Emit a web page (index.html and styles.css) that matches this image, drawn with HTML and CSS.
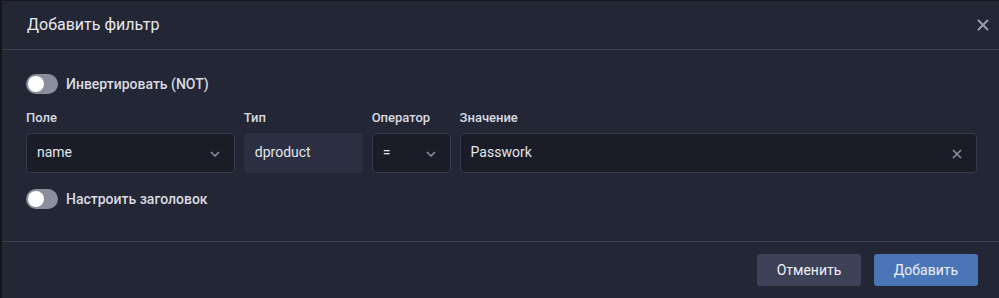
FILE: index.html
```html
<!DOCTYPE html>
<html lang="ru">
<head>
    <meta charset="utf-8">
    <title>Добавить фильтр</title>
    <link rel="stylesheet" href="styles.css">
</head>
<body>
    <div class="modal">
        <div class="modalHeader">
            <h2>Добавить фильтр</h2>
            <button class="closeBtn" aria-label="Закрыть">
                <svg width="12" height="12" viewBox="0 0 12 12"><path d="M1.5 1.5 L10.5 10.5 M10.5 1.5 L1.5 10.5" stroke="currentColor" stroke-width="2" stroke-linecap="round"/></svg>
            </button>
        </div>
        <div class="modalBody">
            <label class="switchRow">
                <span class="switch"><span class="knob"></span></span>
                Инвертировать (NOT)
            </label>
            <div class="fields">
                <div class="field field-name">
                    <span class="fieldLabel">Поле</span>
                    <div class="box">
                        <span>name</span>
                        <svg class="chevron" width="10" height="6" viewBox="0 0 10 6"><path d="M1 1 L5 5 L9 1" fill="none" stroke="currentColor" stroke-width="1.5"/></svg>
                    </div>
                </div>
                <div class="field field-type">
                    <span class="fieldLabel">Тип</span>
                    <div class="box disabled"><span>dproduct</span></div>
                </div>
                <div class="field field-op">
                    <span class="fieldLabel">Оператор</span>
                    <div class="box">
                        <span>=</span>
                        <svg class="chevron" width="10" height="6" viewBox="0 0 10 6"><path d="M1 1 L5 5 L9 1" fill="none" stroke="currentColor" stroke-width="1.5"/></svg>
                    </div>
                </div>
                <div class="field field-value">
                    <span class="fieldLabel">Значение</span>
                    <div class="box">
                        <span>Passwork</span>
                        <svg class="clear" width="10" height="10" viewBox="0 0 10 10"><path d="M1 1 L9 9 M9 1 L1 9" stroke="currentColor" stroke-width="1.6"/></svg>
                    </div>
                </div>
            </div>
            <label class="switchRow">
                <span class="switch"><span class="knob"></span></span>
                Настроить заголовок
            </label>
        </div>
        <div class="modalFooter">
            <button class="btn btn-cancel">Отменить</button>
            <button class="btn btn-primary">Добавить</button>
        </div>
    </div>
</body>
</html>
```

FILE: styles.css
```css
body {
    margin: 0;
    padding: 1px 0 0 2px;
    background-color: #15161c;
    font-family: Roboto, "Liberation Sans", sans-serif;
    color: #d9dbe2;
    overflow: hidden;
}

.modal {
    background-color: #232634;
    min-height: 320px;
}

.modalHeader {
    height: 48px;
    border-bottom: 1px solid #3a3e52;
    display: flex;
    align-items: center;
    justify-content: space-between;
    padding: 0 10px 0 25px;
}

    .modalHeader h2 {
        margin: 0;
        font-size: 16px;
        font-weight: 400;
        color: #e6e8ee;
        padding-bottom: 1px;
    }

.closeBtn {
    background: none;
    border: none;
    color: #9a9dab;
    padding: 0;
    width: 12px;
    height: 12px;
    display: flex;
}

.modalBody {
    padding: 24px 22px 32px 24px;
}

.switchRow {
    display: flex;
    align-items: center;
    gap: 8px;
    font-size: 14px;
    font-weight: 500;
    color: #d9dbe2;
    height: 20px;
}

.switch {
    width: 32px;
    height: 20px;
    border-radius: 10px;
    background-color: #8b8e9c;
    position: relative;
    flex-shrink: 0;
}

    .switch .knob {
        position: absolute;
        left: 2px;
        top: 2px;
        width: 16px;
        height: 16px;
        border-radius: 50%;
        background-color: #ffffff;
    }

.fields {
    display: flex;
    gap: 9px;
    margin: 16px 0 16px;
}

.field {
    display: flex;
    flex-direction: column;
}

.fieldLabel {
    font-size: 13px;
    font-weight: 500;
    line-height: 16px;
    color: #d9dbe2;
    margin-bottom: 7px;
}

.box {
    height: 38px;
    border: 1px solid #363a4c;
    border-radius: 4px;
    background-color: #1a1c27;
    display: flex;
    align-items: center;
    justify-content: space-between;
    padding: 0 14px 0 10px;
    font-size: 14px;
    line-height: 16px;
    color: #e3e5eb;
}

    .box span {
        padding-bottom: 3px;
    }

    .box.disabled {
        background-color: #2c2f41;
        border-color: #2c2f41;
    }

.chevron, .clear {
    color: #8e91a0;
    margin-top: 2px;
}

.field-name { width: 209px; }
.field-type { width: 119px; }
.field-op { width: 79px; }
.field-value { width: 518px; }

.modalFooter {
    border-top: 1px solid #3a3e52;
    display: flex;
    justify-content: flex-end;
    gap: 13px;
    padding: 12px 21px 0 0;
}

.btn {
    width: 104px;
    height: 32px;
    border: none;
    border-radius: 3px;
    font-family: Roboto, "Liberation Sans", sans-serif;
    font-size: 14px;
    color: #eef0f5;
}

.btn-cancel { background-color: #3d4259; }
.btn-primary { background-color: #4a76b8; }
```
